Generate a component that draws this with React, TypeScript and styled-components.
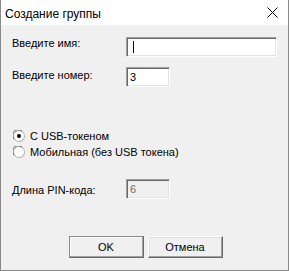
import React from "react";
import styled, { createGlobalStyle } from "styled-components";

const GlobalStyle = createGlobalStyle`
  html, body {
    margin: 0;
    padding: 0;
    background: #f0f0f0;
  }
  * {
    box-sizing: border-box;
  }
`;

const Window = styled.div`
  width: 289px;
  height: 271px;
  display: flex;
  flex-direction: column;
  border: 1px solid #8a8a8a;
  border-top: none;
  background: #f0f0f0;
  font-family: "Liberation Sans", Arial, sans-serif;
  font-size: 11px;
  color: #000;
`;

const TitleBar = styled.div`
  height: 25px;
  flex: none;
  display: flex;
  align-items: center;
  justify-content: space-between;
  background: #fff;
  padding: 2px 0 0 4px;
`;

const Title = styled.span`
  font-size: 12px;
  line-height: 14px;
`;

const CloseButton = styled.div`
  width: 32px;
  height: 25px;
  display: flex;
  align-items: center;
  justify-content: center;
  margin-top: -2px;
`;

const Client = styled.div`
  flex: 1;
  display: flex;
  flex-direction: column;
  padding: 12px 11px 0 11px;
`;

const FieldRow = styled.div<{ $mt?: number }>`
  display: grid;
  grid-template-columns: 114px auto;
  align-items: start;
  margin-top: ${(p) => p.$mt ?? 0}px;
`;

const Label = styled.div<{ $offset?: number }>`
  line-height: 13px;
  padding-top: ${(p) => p.$offset ?? 0}px;
  white-space: nowrap;
`;

const Field = styled.div<{ $width: number; $disabled?: boolean }>`
  width: ${(p) => p.$width}px;
  height: 20px;
  display: flex;
  align-items: center;
  padding: 0 3px;
  line-height: 13px;
  background: ${(p) => (p.$disabled ? "#f0f0f0" : "#fff")};
  color: ${(p) => (p.$disabled ? "#6d6d6d" : "#000")};
  border: 1px solid;
  border-color: #a0a0a0 #fff #fff #a0a0a0;
  box-shadow: inset 1px 1px 0 #696969, inset -1px -1px 0 #e3e3e3;
`;

const Caret = styled.span`
  display: inline-block;
  width: 1px;
  height: 12px;
  margin-left: 3px;
  background: #000;
`;

const RadioGroup = styled.div`
  display: flex;
  flex-direction: column;
  margin-top: 41px;
`;

const RadioRow = styled.div`
  height: 16px;
  display: flex;
  align-items: center;
  gap: 5px;
  padding-left: 1px;
  line-height: 13px;
`;

const FieldGap = styled.div`
  height: 19px;
`;

const Buttons = styled.div`
  display: flex;
  justify-content: center;
  gap: 4px;
  margin-top: 37px;
  padding-left: 2px;
`;

const Button = styled.div<{ $default?: boolean }>`
  width: 75px;
  height: 22px;
  display: flex;
  align-items: center;
  justify-content: center;
  background: #f0f0f0;
  border: 1px solid;
  border-color: ${(p) => (p.$default ? "#8a8a8a" : "#fff")} #696969 #696969
    ${(p) => (p.$default ? "#8a8a8a" : "#fff")};
  box-shadow: inset -1px -1px 0 #a0a0a0,
    ${(p) => (p.$default ? "inset 1px 1px 0 #fff" : "inset 1px 1px 0 #e3e3e3")};
  line-height: 13px;
`;

const CloseIcon = () => (
  <svg width="11" height="11" viewBox="0 0 11 11">
    <path d="M0.5 0.5 L10.5 10.5 M10.5 0.5 L0.5 10.5" stroke="#000" strokeWidth="1" />
  </svg>
);

const RadioIcon = ({ checked }: { checked?: boolean }) => (
  <svg width="12" height="12" viewBox="0 0 12 12">
    <circle cx="6" cy="6" r="5.5" fill="#fff" stroke="#a0a0a0" strokeWidth="1" />
    <path d="M1.2 9 A5 5 0 0 1 9 1.2" fill="none" stroke="#696969" strokeWidth="1" />
    <path d="M3 10.8 A5 5 0 0 0 10.8 3" fill="none" stroke="#e3e3e3" strokeWidth="1" />
    {checked && <circle cx="6" cy="6" r="2" fill="#000" />}
  </svg>
);

const App = () => {
  return (
    <>
      <GlobalStyle />
      <Window>
        <TitleBar>
          <Title>Создание группы</Title>
          <CloseButton>
            <CloseIcon />
          </CloseButton>
        </TitleBar>

        <Client>
          <FieldRow>
            <Label $offset={0}>Введите имя:</Label>
            <Field $width={151}>
              <Caret />
            </Field>
          </FieldRow>

          <FieldRow $mt={10}>
            <Label $offset={2}>Введите номер:</Label>
            <Field $width={44}>3</Field>
          </FieldRow>

          <RadioGroup>
            <RadioRow>
              <RadioIcon checked />
              С USB-токеном
            </RadioRow>
            <RadioRow>
              <RadioIcon />
              Мобильная (без USB токена)
            </RadioRow>
          </RadioGroup>

          <FieldGap />

          <FieldRow>
            <Label $offset={5}>Длина PIN-кода:</Label>
            <Field $width={44} $disabled>
              6
            </Field>
          </FieldRow>

          <Buttons>
            <Button $default>OK</Button>
            <Button>Отмена</Button>
          </Buttons>
        </Client>
      </Window>
    </>
  );
};

export default App;
